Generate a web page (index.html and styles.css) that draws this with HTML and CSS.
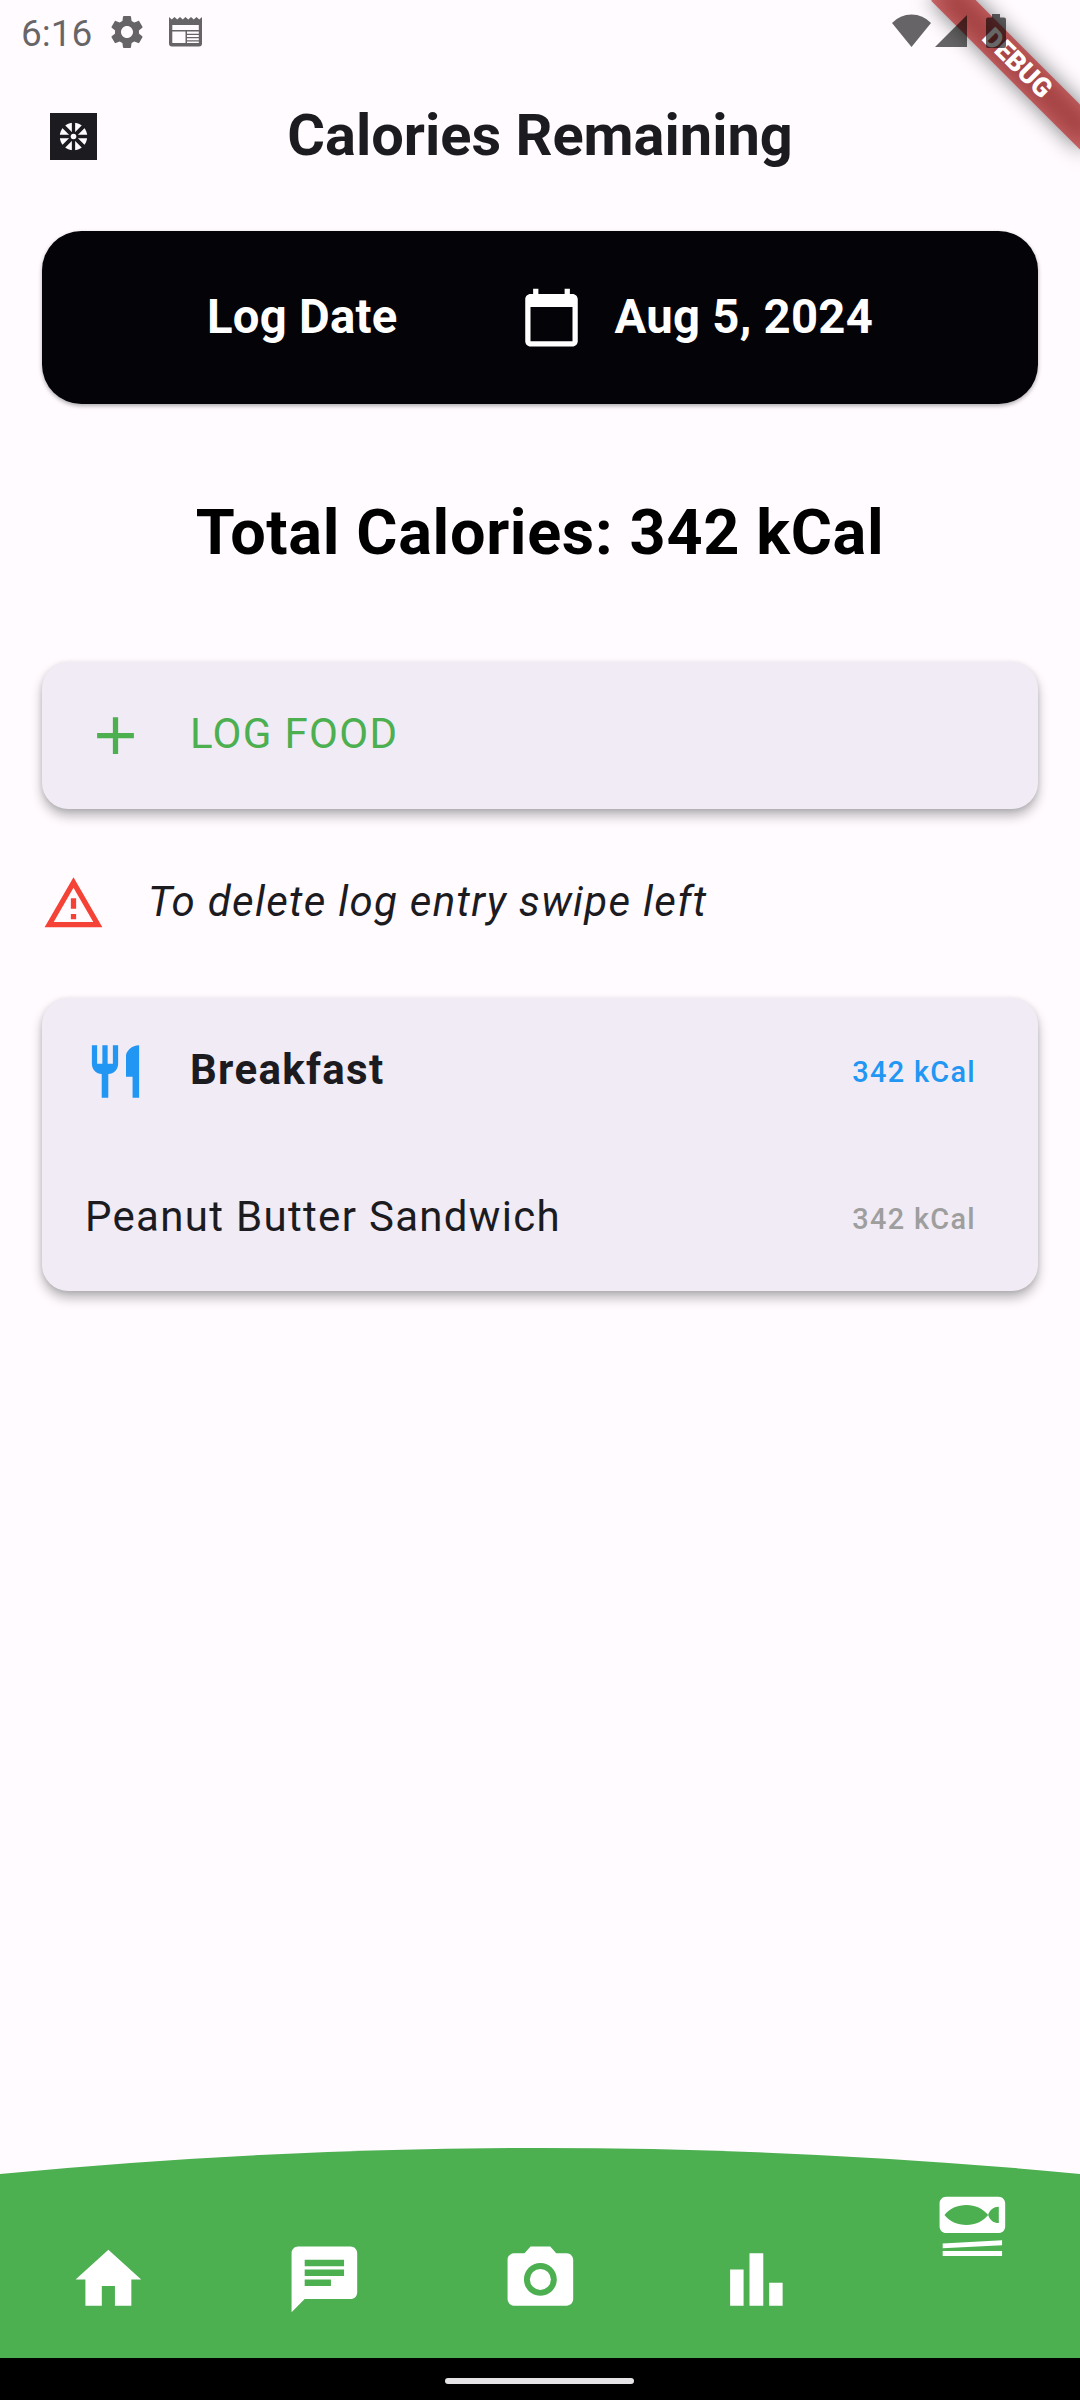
FILE: index.html
```html
<!DOCTYPE html>
<html lang="en">
<head>
<meta charset="utf-8">
<title>Calories Remaining</title>
<link rel="stylesheet" href="styles.css">
</head>
<body>
<div class="screen">
  <div class="debug" aria-hidden="true">
    <div class="debug-band debug-shadow"></div>
    <div class="debug-band debug-label">DEBUG</div>
  </div>

  <div class="status">
    <span class="clock">6:16</span>
    <svg class="status-gear" viewBox="0 0 24 24"><path d="M19.14 12.94c.04-.3.06-.61.06-.94 0-.32-.02-.64-.07-.94l2.03-1.58c.18-.14.23-.41.12-.61l-1.92-3.32c-.12-.22-.37-.29-.59-.22l-2.39.96c-.5-.38-1.03-.7-1.62-.94L14.4 2.81c-.04-.24-.24-.41-.48-.41h-3.84c-.24 0-.43.17-.47.41L9.25 5.35c-.59.24-1.13.57-1.62.94l-2.39-.96c-.22-.08-.47 0-.59.22L2.74 8.87c-.12.21-.08.47.12.61l2.03 1.58c-.05.3-.09.63-.09.94s.02.64.07.94l-2.03 1.58c-.18.14-.23.41-.12.61l1.92 3.32c.12.22.37.29.59.22l2.39-.96c.5.38 1.03.7 1.62.94l.36 2.54c.05.24.24.41.48.41h3.84c.24 0 .44-.17.47-.41l.36-2.54c.59-.24 1.13-.56 1.62-.94l2.39.96c.22.08.47 0 .59-.22l1.92-3.32c.12-.22.07-.47-.12-.61l-2.01-1.58zM12 15.6c-1.98 0-3.6-1.62-3.6-3.6s1.62-3.6 3.6-3.6 3.6 1.62 3.6 3.6-1.62 3.6-3.6 3.6z"/></svg>
    <svg class="status-news" viewBox="0 0 33 30"><path fill-rule="evenodd" d="M0 0l2.75 2.500L5.500 0l2.750 2.500L11 0l2.750 2.500L16.500 0l2.750 2.500L22 0l2.750 2.500L27.500 0l2.750 2.500L33 0v26.500a3 3 0 0 1-3 3H3a3 3 0 0 1-3-3zM3.300 8v5h26.500V8zM3.300 14.500V26H16.500V14.500zM18 14.500v2.200h11.800v-2.200zM18 18v2h11.800v-2zM18 21.200v2h11.800v-2zM18 24.400V26h11.800v-1.600z"/></svg>
    <div class="status-right">
      <svg class="wifi" viewBox="0 0 39 33"><path d="M19.500 33L0 9Q8 .5 19.500.5T39 9z"/></svg>
      <svg class="signal" viewBox="0 0 32 32"><path d="M0 32L32 0v32z"/></svg>
      <svg class="battery" viewBox="0 0 20 34"><path d="M6 0h8v3.500h4a2 2 0 0 1 2 2V32a2 2 0 0 1-2 2H2a2 2 0 0 1-2-2V5.500a2 2 0 0 1 2-2h4z"/></svg>
    </div>
  </div>

  <header class="appbar">
    <svg class="brand" viewBox="0 0 47 47">
      <path fill="#1c1b1f" d="M0 0h47v47H0z"/>
      <circle cx="23.500" cy="23.500" r="13.700" fill="#fffbff"/>
      <path stroke="#1c1b1f" stroke-width="3.300" d="M23.500 9v29M9 23.500h29"/>
      <path stroke="#1c1b1f" stroke-width="3.900" d="M13.200 13.200l20.600 20.600M33.800 13.200L13.200 33.800"/>
      <circle cx="23.500" cy="23.500" r="4.400" fill="#1c1b1f"/>
      <circle cx="23.500" cy="23.500" r="2.800" fill="#fffbff"/>
    </svg>
    <h1>Calories Remaining</h1>
  </header>

  <main>
    <section class="date-card">
      <span class="date-text">Log Date</span>
      <button class="date-button">
        <svg class="icon" viewBox="0 0 24 24"><path d="M20 3h-1V1h-2v2H7V1H5v2H4c-1.100 0-2 .9-2 2v16c0 1.100.9 2 2 2h16c1.100 0 2-.9 2-2V5c0-1.100-.9-2-2-2zm0 18H4V8h16v13z"/></svg>
        <span class="date-text">Aug 5, 2024</span>
      </button>
    </section>

    <h2>Total Calories: 342 kCal</h2>

    <section class="card">
      <div class="tile add">
        <svg class="icon" viewBox="0 0 24 24"><path d="M19 13h-6v6h-2v-6H5v-2h6V5h2v6h6v2z"/></svg>
        <span class="tile-title">LOG FOOD</span>
      </div>
    </section>

    <div class="hint">
      <svg class="icon" viewBox="0 0 24 24"><path d="M12 5.990L19.530 19H4.470L12 5.990M12 2L1 21h22L12 2zm1 14h-2v2h2v-2zm0-6h-2v4h2v-4z"/></svg>
      <em class="tile-title">To delete log entry swipe left</em>
    </div>

    <section class="card">
      <div class="tile meal">
        <svg class="icon" viewBox="0 0 24 24"><path d="M11 9H9V2H7v7H5V2H3v7c0 2.120 1.660 3.840 3.750 3.970V22h2.500v-9.030C11.340 12.840 13 11.120 13 9V2h-2v7zm5-3v8h2.500v8H21V2c-2.760 0-5 2.240-5 4z"/></svg>
        <strong class="tile-title">Breakfast</strong>
        <span class="kcal">342 kCal</span>
      </div>
      <div class="tile entry">
        <span class="tile-title">Peanut Butter Sandwich</span>
        <span class="kcal">342 kCal</span>
      </div>
    </section>
  </main>

  <nav>
    <svg class="nav-curve" viewBox="0 0 1080 210"><path d="M0 26Q540-26 1080 26V210H0z"/></svg>
    <div class="nav-items">
      <svg viewBox="0 0 24 24"><path d="M10 20v-6h4v6h5v-8h3L12 3 2 12h3v8z"/></svg>
      <svg viewBox="0 0 24 24"><path d="M20 2H4c-1.100 0-2 .9-2 2v18l4-4h14c1.100 0 2-.9 2-2V4c0-1.100-.9-2-2-2zm-2 6H6V6h12v2zm0 3H6V9h12v2zm-4 3H6v-2h8v2z"/></svg>
      <svg viewBox="0 0 24 24"><circle cx="12" cy="12" r="3.200"/><path d="M9 2L7.170 4H4c-1.100 0-2 .9-2 2v12c0 1.100.9 2 2 2h16c1.100 0 2-.9 2-2V6c0-1.100-.9-2-2-2h-3.170L15 2H9zm3 15c-2.760 0-5-2.240-5-5s2.240-5 5-5 5 2.240 5 5-2.240 5-5 5z"/></svg>
      <svg viewBox="0 0 24 24"><path d="M4 9h4.100v11H4zM9.900 4h4.200v16H9.900zM15.900 13H20v7h-4.100z"/></svg>
      <svg class="raised" viewBox="0 0 24 24"><path fill-rule="evenodd" d="M4 3h16c1.100 0 2 .9 2 2v7c0 1.100-.9 2-2 2H4c-1.100 0-2-.9-2-2V5c0-1.100.9-2 2-2zM3.500 8.500c1.500 2 4 3.050 6.700 3.050s5-1.050 6.600-3.050c-1.600-2-3.900-3.050-6.600-3.050S5 6.500 3.500 8.500zM20.050 6c-1.600.05-2.700.9-3.250 2.500.55 1.600 1.650 2.450 3.250 2.500zM2.950 17.200l18.100-.95v1.500l-18.100.95zM2.950 19.500h18.100V21H2.950z"/></svg>
    </div>
  </nav>
  <div class="gesture"><div class="pill"></div></div>
</div>
</body>
</html>
```
FILE: styles.css
```css
* { box-sizing: border-box; }

body {
  margin: 0;
  background: #fffbff;
  color: #1c1b1f;
  font-family: Roboto, "Liberation Sans", sans-serif;
}

.screen {
  position: relative;
  display: flex;
  flex-direction: column;
  width: 1080px;
  height: 2400px;
  overflow: hidden;
}

svg { display: block; flex: none; }
h1, h2 { margin: 0; font-weight: 700; }

/* Debug ribbon across the top right corner */
.debug {
  position: absolute;
  top: 0;
  right: 0;
  width: 200px;
  height: 200px;
  overflow: hidden;
}
.debug-band {
  position: absolute;
  left: 95px;
  top: 73.5px;
  width: 210px;
  height: 31.5px;
  transform-origin: 105px -73.5px;
  transform: rotate(45deg);
}
.debug-shadow { background: rgba(0, 0, 0, .5); filter: blur(10.4px); }
.debug-label {
  background: rgba(183, 28, 28, .63);
  color: #fff;
  font-size: 26.8px;
  font-weight: 900;
  line-height: 31.5px;
  text-align: center;
}

/* Status bar */
.status {
  position: relative;
  display: flex;
  align-items: flex-start;
  height: 63px;
  padding-left: 21px;
  color: rgba(0, 0, 0, .6);
  fill: rgba(0, 0, 0, .6);
}
.clock { width: 87px; font-size: 37px; line-height: 44px; padding-top: 12px; }
.status-gear { width: 40px; height: 40px; margin: 12px 0 0 -1px; }
.status-news { width: 33px; height: 30px; margin: 17px 0 0 21.5px; }
.status-right { display: flex; margin: 14px 74px 0 auto; }
.wifi { width: 39px; height: 33px; }
.signal { width: 32px; height: 32px; margin: 1px 19px 0 4px; }
.battery { width: 20px; height: 34px; }

/* App bar */
.appbar {
  display: grid;
  grid-template-columns: 48px 1fr 48px;
  align-items: center;
  height: 147px;
  padding: 0 50px;
}
.brand { width: 47px; height: 47px; }
h1 { font-size: 57.75px; line-height: 68px; text-align: center; margin-top: -3px; }

main {
  display: flex;
  flex-direction: column;
  flex: 1;
  padding: 21px 42px 0;
}
.icon { width: 63px; height: 63px; fill: currentColor; }

.date-card {
  display: flex;
  align-items: center;
  justify-content: center;
  gap: 122px;
  height: 173px;
  border-radius: 39.4px;
  background: #040308;
  color: #fff;
  font-size: 47.25px;
  font-weight: 700;
  letter-spacing: .27px;
  box-shadow: 0 2px 4px rgba(0, 0, 0, .32);
}
.date-text { padding-bottom: 2px; }
.date-button {
  display: flex;
  align-items: center;
  gap: 32px;
  padding: 0;
  border: 0;
  background: none;
  color: inherit;
  font: inherit;
  letter-spacing: inherit;
}

h2 {
  margin: 91px 0 92px;
  color: #000;
  font-size: 63px;
  line-height: 75px;
  letter-spacing: .656px;
  text-align: center;
}

.card {
  border-radius: 26.25px;
  background: #f0ebf4;
  box-shadow: 0 7px 12px rgba(0, 0, 0, .28), 0 1px 5px rgba(0, 0, 0, .1);
}
.tile {
  display: flex;
  align-items: center;
  height: 147px;
  padding: 0 62px 0 42px;
}
.tile-title {
  padding-bottom: 4px;
  font-size: 42px;
  letter-spacing: 1.31px;
  line-height: 63px;
}
.icon + .tile-title { margin-left: 43px; }
.entry { height: 146px; padding-top: 1px; }
.entry .tile-title { margin-left: 1px; }
.add { color: #4caf50; }
.meal .icon { color: #2196f3; }
.kcal { margin-left: auto; font-size: 28.9px; font-weight: 500; letter-spacing: 1.31px; }
.meal .kcal { color: #2196f3; }
.entry .kcal { color: #9e9e9e; }

.hint {
  display: flex;
  align-items: center;
  height: 189px;
}
.hint .icon { color: #f44336; }

/* Bottom navigation */
nav { display: grid; height: 210px; }
.nav-curve, .nav-items { grid-area: 1 / 1; }
.nav-curve { width: 1080px; height: 210px; fill: #4caf50; }
.nav-items {
  display: grid;
  grid-template-columns: repeat(5, 1fr);
  justify-items: center;
  align-items: start;
  padding-top: 92px;
  fill: #fff;
}
.nav-items svg { width: 78.75px; height: 78.75px; }
.nav-items .raised { margin-top: -53px; }

.gesture {
  display: flex;
  justify-content: center;
  height: 42px;
  padding: 20px 1px 0 0;
  background: #000;
}
.pill { width: 189px; height: 6px; border-radius: 3px; background: #e6e3e6; }
```
